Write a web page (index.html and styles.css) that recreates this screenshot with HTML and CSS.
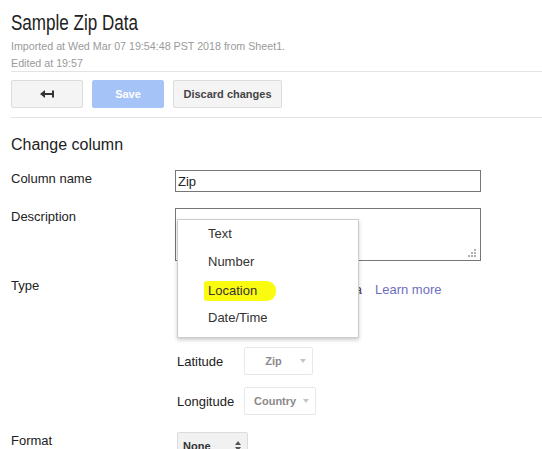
FILE: index.html
```html
<!DOCTYPE html>
<html lang="en">
<head>
<meta charset="utf-8">
<title>Sample Zip Data</title>
<link rel="stylesheet" href="styles.css">
</head>
<body>
<div class="page">
  <header class="head">
    <h1 class="title"><span class="title-text">Sample Zip Data</span></h1>
    <div class="meta">
      <div>Imported at Wed Mar 07 19:54:48 PST 2018 from Sheet1.</div>
      <div>Edited at 19:57</div>
    </div>
  </header>

  <div class="toolbar">
    <button class="btn btn-back" type="button" aria-label="Back">
      <svg width="14" height="8" viewBox="0 0 14 8"><path d="M0 4 L5 0 L5 3 L12 3 L12 0.5 L14 0.5 L14 7.5 L12 7.5 L12 5 L5 5 L5 8 Z" fill="#333"/></svg>
    </button>
    <button class="btn btn-save" type="button">Save</button>
    <button class="btn btn-discard" type="button">Discard changes</button>
  </div>

  <section class="editor">
    <h2 class="section-title">Change column</h2>

    <div class="row">
      <label class="row-label">Column name</label>
      <input class="text-input" type="text" value="Zip">
    </div>

    <div class="row">
      <label class="row-label">Description</label>
      <div class="area-wrap">
        <textarea class="text-area"></textarea>
        <span class="grip"></span>
      </div>
    </div>

    <div class="row">
      <label class="row-label">Type</label>
      <div class="type-field">
        <span class="type-note">Two-column location data</span>
        <a class="learn" href="#">Learn more</a>
        <ul class="menu">
          <li class="menu-item">Text</li>
          <li class="menu-item">Number</li>
          <li class="menu-item"><span class="mark">Location</span></li>
          <li class="menu-item">Date/Time</li>
        </ul>
      </div>
    </div>

    <div class="subrow subrow-first">
      <span class="sub-label">Latitude</span>
      <span class="dd"><span class="dd-caption">Zip</span><span class="dd-arrow"></span></span>
    </div>
    <div class="subrow">
      <span class="sub-label">Longitude</span>
      <span class="dd"><span class="dd-caption">Country</span><span class="dd-arrow"></span></span>
    </div>

    <div class="row row-format">
      <label class="row-label">Format</label>
      <span class="spin"><span class="spin-caption">None</span><span class="spin-arrows"><span class="up"></span><span class="down"></span></span></span>
    </div>
  </section>
</div>
</body>
</html>
```

FILE: styles.css
```css
html, body {
  margin: 0;
  background: #fff;
  overflow: hidden;
}

body {
  font-family: "Liberation Sans", Arial, sans-serif;
  color: #222;
}

.page {
  padding-left: 11px;
}

/* header */
.head {
  border-bottom: 1px solid #e3e3e3;
}

.title {
  margin: 10px 0 0;
  font-size: 22px;
  line-height: 25px;
  font-weight: normal;
  color: #222;
}

/* the heading face is a condensed sans */
.title-text {
  display: inline-block;
  transform: scaleX(0.775);
  transform-origin: left center;
}

.meta {
  margin-top: 3px;
  margin-bottom: -1px;
  font-size: 10.7px;
  line-height: 17px;
  color: #9a9a9a;
}

/* toolbar */
.toolbar {
  display: flex;
  gap: 9px;
  padding: 8px 0 9px;
  border-bottom: 1px solid #e3e3e3;
}

.btn {
  height: 28px;
  box-sizing: border-box;
  border: 1px solid #dcdcdc;
  border-radius: 2px;
  background: #f4f4f4;
  font-family: "Liberation Sans", Arial, sans-serif;
  font-weight: bold;
  font-size: 11px;
  color: #444;
  padding: 0 8px;
  display: flex;
  align-items: center;
  justify-content: center;
}

.btn-back { width: 72px; }

.btn-save {
  width: 72px;
  background: #a6c3f7;
  border-color: #a6c3f7;
  color: #fff;
}

.btn-discard { width: 109px; }

/* form */
.section-title {
  margin: 17px 0 0;
  font-size: 16px;
  line-height: 20px;
  font-weight: normal;
  color: #222;
}

.row {
  display: flex;
  align-items: flex-start;
  margin-top: 16px;
}

.section-title + .row { margin-top: 15px; }

.row-label {
  width: 164px;
  flex: none;
  font-size: 13px;
  line-height: 16px;
  padding-top: 1px;
  color: #222;
}

.text-input {
  width: 306px;
  height: 22px;
  box-sizing: border-box;
  margin: 0;
  border: 1px solid #767676;
  border-radius: 0;
  padding: 0 2px;
  font-family: "Liberation Sans", Arial, sans-serif;
  font-size: 13px;
  color: #222;
  outline: none;
}

.area-wrap {
  position: relative;
  width: 306px;
  height: 53px;
}

.text-area {
  display: block;
  width: 306px;
  height: 53px;
  box-sizing: border-box;
  margin: 0;
  border: 1px solid #767676;
  border-radius: 0;
  resize: none;
  outline: none;
}

/* resize grip in the corner of the text area */
.grip {
  position: absolute;
  right: 5px;
  bottom: 4px;
  width: 8px;
  height: 8px;
  background:
    linear-gradient(#b0b0b0, #b0b0b0) 6px 0 / 2px 2px no-repeat,
    linear-gradient(#b0b0b0, #b0b0b0) 3px 3px / 2px 2px no-repeat,
    linear-gradient(#b0b0b0, #b0b0b0) 6px 3px / 2px 2px no-repeat,
    linear-gradient(#b0b0b0, #b0b0b0) 0 6px / 2px 2px no-repeat,
    linear-gradient(#b0b0b0, #b0b0b0) 3px 6px / 2px 2px no-repeat,
    linear-gradient(#b0b0b0, #b0b0b0) 6px 6px / 2px 2px no-repeat;
}

/* type */
.type-field {
  position: relative;
  display: flex;
  align-items: center;
  height: 24px;
  font-size: 13px;
}

.type-note {
  width: 187px;
  flex: none;
  text-align: right;
  white-space: nowrap;
  overflow: hidden;
  color: #444;
}

.learn {
  margin-left: 13px;
  color: #6e6ec0;
  text-decoration: none;
}

.menu {
  position: absolute;
  left: 2px;
  top: -58px;
  width: 182px;
  box-sizing: border-box;
  margin: 0;
  padding: 0 0 5px;
  list-style: none;
  background: #fff;
  border: 1px solid rgba(0, 0, 0, 0.2);
  box-shadow: 0 2px 4px rgba(0, 0, 0, 0.2);
}

.menu-item {
  padding-left: 30px;
  line-height: 28px;
  font-size: 13px;
  color: #333;
}

.mark {
  display: inline-block;
  line-height: 16px;
  padding: 2px 19px 2px 4px;
  margin-left: -4px;
  background: #fbfb10;
  border-radius: 3px 9px 9px 3px;
  vertical-align: middle;
}

/* latitude / longitude */
.subrow {
  display: flex;
  align-items: center;
  margin-left: 166px;
  margin-top: 12px;
}

.subrow-first { margin-top: 46px; }

.sub-label {
  width: 67px;
  flex: none;
  font-size: 13px;
  color: #222;
}

.dd {
  display: inline-flex;
  align-items: center;
  height: 28px;
  box-sizing: border-box;
  border: 1px solid #e8e8e8;
  border-radius: 2px;
  padding: 0 6px 0 9px;
  background: #fff;
  font-weight: bold;
  font-size: 11px;
  color: #8a8a8a;
}

.dd-caption {
  min-width: 39px;
  text-align: center;
}

.dd-arrow {
  width: 0;
  height: 0;
  margin-left: 7px;
  border-left: 3.5px solid transparent;
  border-right: 3.5px solid transparent;
  border-top: 4px solid #c4c4c4;
}

/* format */
.row-format { margin-top: 17px; }

.spin {
  display: inline-flex;
  align-items: center;
  width: 71px;
  height: 28px;
  margin-left: 2px;
  box-sizing: border-box;
  border: 1px solid #dcdcdc;
  border-radius: 2px;
  background: #f1f1f1;
  padding: 0 6px 0 5px;
  font-weight: bold;
  font-size: 11px;
  color: #333;
}

.spin-caption { flex: 1; }

.spin-arrows {
  display: flex;
  flex-direction: column;
  gap: 2px;
}

.spin-arrows .up {
  width: 0;
  height: 0;
  border-left: 3.5px solid transparent;
  border-right: 3.5px solid transparent;
  border-bottom: 4px solid #555;
}

.spin-arrows .down {
  width: 0;
  height: 0;
  border-left: 3.5px solid transparent;
  border-right: 3.5px solid transparent;
  border-top: 4px solid #555;
}
```
